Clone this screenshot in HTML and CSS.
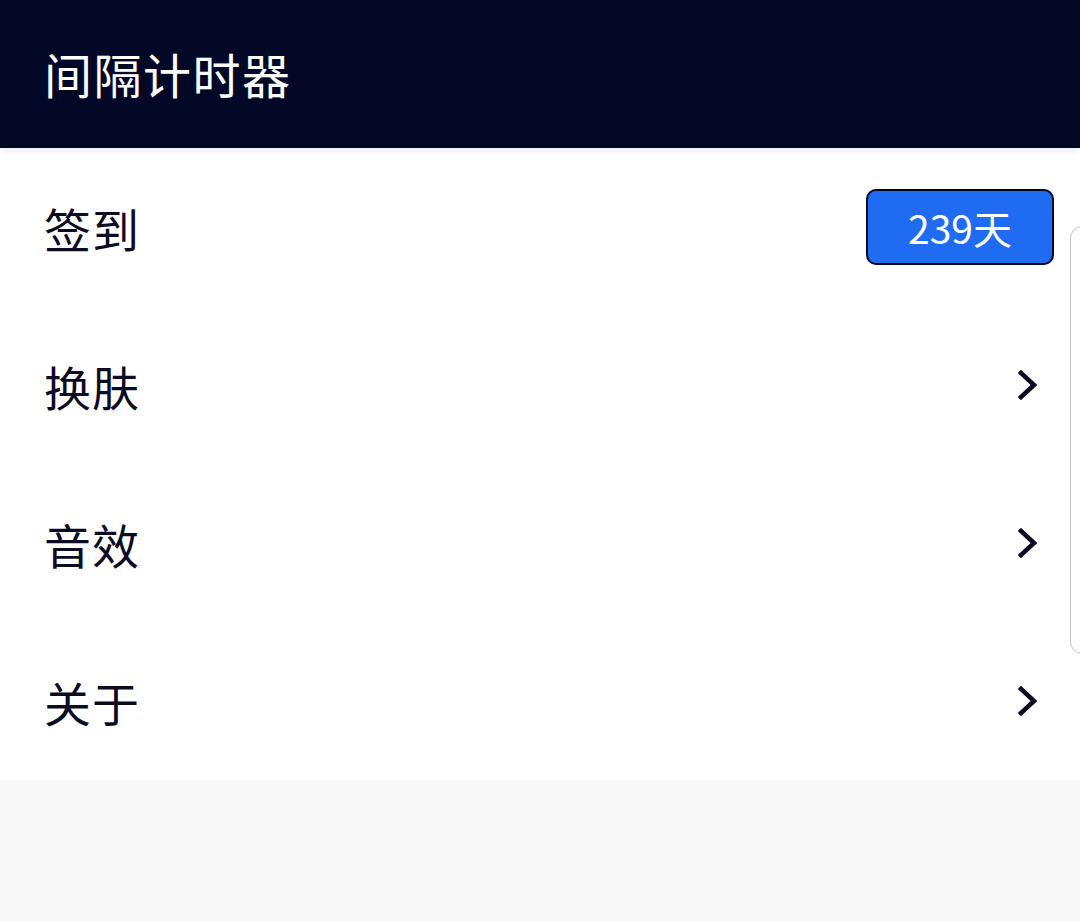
FILE: index.html
```html
<!DOCTYPE html>
<html lang="zh-CN">
<head>
<meta charset="utf-8">
<title>间隔计时器</title>
<link rel="stylesheet" href="styles.css">
</head>
<body>
<header class="appbar">
  <h1 class="title">间隔计时器</h1>
</header>
<main class="card">
  <div class="row">
    <span class="label">签到</span>
    <span class="badge">239天</span>
  </div>
  <div class="row">
    <span class="label">换肤</span>
    <svg class="chev" viewBox="0 0 20 30" width="20" height="30"><polyline points="3,3 16,15 3,27" /></svg>
  </div>
  <div class="row">
    <span class="label">音效</span>
    <svg class="chev" viewBox="0 0 20 30" width="20" height="30"><polyline points="3,3 16,15 3,27" /></svg>
  </div>
  <div class="row">
    <span class="label">关于</span>
    <svg class="chev" viewBox="0 0 20 30" width="20" height="30"><polyline points="3,3 16,15 3,27" /></svg>
  </div>
</main>
<div class="edge-handle"></div>
</body>
</html>
```
FILE: styles.css
```css
html, body {
  margin: 0;
  padding: 0;
}
body {
  background: #f8f8f8;
  font-family: "Noto Sans CJK SC", "Noto Sans", sans-serif;
  color: #0b0b24;
  width: 1080px;
  height: 921px;
  overflow: hidden;
  position: relative;
}
.appbar {
  height: 148px;
  background: #020826;
  display: flex;
  align-items: center;
  padding-left: 44px;
  box-shadow: 0 3px 8px rgba(0, 0, 0, 0.08);
  position: relative;
  z-index: 1;
}
.title {
  margin: 0;
  color: #ffffff;
  font-weight: 400;
  font-size: 48px;
  letter-spacing: 1.5px;
  line-height: 1;
  padding-bottom: 2px;
}
.card {
  background: #ffffff;
  display: flex;
  flex-direction: column;
}
.row {
  height: 158px;
  display: flex;
  align-items: center;
  justify-content: space-between;
  padding: 0 26px 0 44px;
}
.label {
  font-size: 47px;
  letter-spacing: 1px;
  line-height: 1;
}
.badge {
  width: 188px;
  height: 76px;
  box-sizing: border-box;
  border: 2.5px solid #020826;
  border-radius: 10px;
  background: #1f6cf2;
  color: #ffffff;
  font-size: 39px;
  display: flex;
  align-items: center;
  justify-content: center;
}
.chev {
  margin-right: 16px;
  fill: none;
  stroke: #0b0b24;
  stroke-width: 4.6;
  stroke-linecap: square;
}
.edge-handle {
  position: absolute;
  left: 1070px;
  top: 226px;
  width: 30px;
  height: 428px;
  border: 1.5px solid #c4c4c4;
  border-radius: 12px;
  box-sizing: border-box;
}
```
